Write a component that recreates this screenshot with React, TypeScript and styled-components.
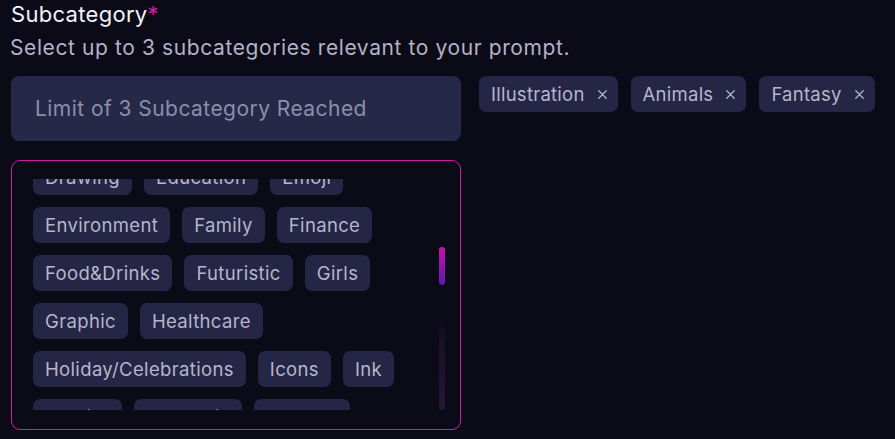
import React, { useLayoutEffect, useRef } from "react";
import styled, { createGlobalStyle } from "styled-components";

const selected = ["Illustration", "Animals", "Fantasy"];

const categories = [
  "Abstract",
  "Anime",
  "Architecture",
  "Art",
  "Cartoon",
  "Characters",
  "Children",
  "Clothing",
  "Comics",
  "Cyberpunk",
  "Design",
  "Digital Art",
  "Drawing",
  "Education",
  "Emoji",
  "Environment",
  "Family",
  "Finance",
  "Food&Drinks",
  "Futuristic",
  "Girls",
  "Graphic",
  "Healthcare",
  "Holiday/Celebrations",
  "Icons",
  "Ink",
  "Interior",
  "Isometric",
  "Jewelry",
  "Landscape",
  "Logo",
  "Minimalist",
  "Nature",
  "Patterns",
  "People",
  "Photography",
  "Portrait",
  "Retro",
  "Sci-Fi",
  "Space",
  "Sports",
  "Technology",
  "Travel",
  "Vehicles",
  "Vintage",
  "Wallpaper",
];

const SCROLL_ANCHOR = "Drawing";

const GlobalStyle = createGlobalStyle`
  html, body {
    margin: 0;
    padding: 0;
    background: #0b0a17;
  }
  body {
    font-family: Inter, "Noto Sans", sans-serif;
  }
`;

const CrossIcon: React.FC = () => (
  <svg width="9" height="9" viewBox="0 0 9 9" fill="none">
    <path d="M0.8 0.8 L8.2 8.2 M8.2 0.8 L0.8 8.2" stroke="#b4b1c8" strokeWidth="1.3" strokeLinecap="round" />
  </svg>
);

const App: React.FC = () => {
  const scrollRef = useRef<HTMLDivElement>(null);
  const anchorRef = useRef<HTMLSpanElement>(null);

  useLayoutEffect(() => {
    // keep the "Drawing" row half scrolled out, like the screenshot
    if (scrollRef.current && anchorRef.current) {
      scrollRef.current.scrollTop = anchorRef.current.offsetTop + 20;
    }
  }, []);

  return (
    <Page>
      <GlobalStyle />
      <Title>
        Subcategory<span className="req">*</span>
      </Title>
      <Hint>Select up to 3 subcategories relevant to your prompt.</Hint>
      <FieldRow>
        <LeftColumn>
          <SearchInput placeholder="Limit of 3 Subcategory Reached" disabled />
          <Panel>
            <ChipScroller ref={scrollRef}>
              <ChipGrid>
                {categories.map((c) => (
                  <Chip key={c} ref={c === SCROLL_ANCHOR ? anchorRef : undefined}>
                    {c}
                  </Chip>
                ))}
              </ChipGrid>
            </ChipScroller>
            <ScrollRail>
              <ScrollThumb />
            </ScrollRail>
          </Panel>
        </LeftColumn>
        <SelectedList>
          {selected.map((s) => (
            <SelectedChip key={s}>
              {s}
              <button className="remove" aria-label={`Remove ${s}`}>
                <CrossIcon />
              </button>
            </SelectedChip>
          ))}
        </SelectedList>
      </FieldRow>
    </Page>
  );
};

export default App;

const Page = styled.div`
  padding: 0 11px;
  width: 895px;
  height: 439px;
  box-sizing: border-box;
  overflow: hidden;
`;

const Title = styled.h2`
  margin: 0;
  font-size: 22px;
  line-height: 28px;
  font-weight: 400;
  letter-spacing: 0.3px;
  color: #f4f3f8;

  .req {
    color: #d21aa8;
  }
`;

const Hint = styled.p`
  margin: 6px 0 0 -1px;
  font-size: 21px;
  line-height: 28px;
  letter-spacing: 0.6px;
  color: #b5b1c7;
`;

const FieldRow = styled.div`
  display: flex;
  align-items: flex-start;
  gap: 18px;
  margin-top: 14px;
`;

const LeftColumn = styled.div`
  display: flex;
  flex-direction: column;
  gap: 19px;
  width: 450px;
  flex-shrink: 0;
`;

const SearchInput = styled.input`
  height: 65px;
  box-sizing: border-box;
  border: none;
  outline: none;
  border-radius: 8px;
  background: #262848;
  padding: 0 24px;
  font-family: inherit;
  font-size: 21px;
  letter-spacing: 0.45px;
  color: #8d8ea9;

  &::placeholder {
    color: #8d8ea9;
  }
`;

const Panel = styled.div`
  display: flex;
  gap: 6px;
  height: 270px;
  box-sizing: border-box;
  border: 1px solid #d21aa8;
  border-radius: 9px;
  padding: 18px 15px 18px 21px;
`;

const ChipScroller = styled.div`
  position: relative;
  width: 400px;
  height: 231px;
  overflow-y: auto;
  scrollbar-width: none;

  &::-webkit-scrollbar {
    display: none;
  }
`;

const ChipGrid = styled.div`
  display: flex;
  flex-wrap: wrap;
  gap: 12px;
`;

const Chip = styled.span`
  display: inline-flex;
  align-items: center;
  height: 36px;
  padding: 0 12px;
  border-radius: 7px;
  background: #252645;
  color: #b8b5cb;
  font-size: 18.5px;
  letter-spacing: 0.35px;
  white-space: nowrap;
`;

const ScrollRail = styled.div`
  width: 6px;
  height: 231px;
  border-radius: 3px;
  background: linear-gradient(
    to bottom,
    transparent 0%,
    transparent 60%,
    #1c1029 72%,
    #261538 100%
  );
`;

const ScrollThumb = styled.div`
  margin-top: 68px;
  height: 38px;
  border-radius: 3px;
  background: linear-gradient(to bottom, #c912a9, #5e17b3);
`;

const SelectedList = styled.div`
  display: flex;
  gap: 13px;
`;

const SelectedChip = styled.span`
  display: inline-flex;
  align-items: center;
  gap: 13px;
  height: 36px;
  padding: 0 11px 0 12px;
  border-radius: 7px;
  background: #252645;
  color: #b8b5cb;
  font-size: 18.5px;
  letter-spacing: 0.25px;
  white-space: nowrap;

  .remove {
    display: flex;
    padding: 0;
    border: none;
    background: none;
    cursor: pointer;
  }
`;
